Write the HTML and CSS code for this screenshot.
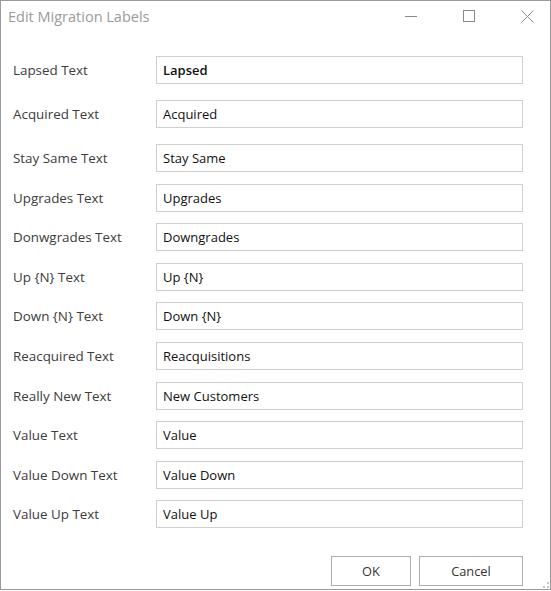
FILE: index.html
```html
<!DOCTYPE html>
<html lang="en">

<head>
    <meta charset="UTF-8">
    <meta name="viewport" content="width=device-width, initial-scale=1.0">
    <title>Edit Migration Labels</title>
    <link rel="stylesheet" href="styles.css">
</head>

<body>
    <div class="window">
        <div class="titlebar">
            <span class="title">Edit Migration Labels</span>
            <div class="controls">
                <svg width="12" height="12" viewBox="0 0 12 12">
                    <line x1="0" y1="6.5" x2="12" y2="6.5" stroke="#8a8a8a" stroke-width="1" />
                </svg>
                <svg width="12" height="12" viewBox="0 0 12 12">
                    <rect x="0.5" y="0.5" width="11" height="11" fill="none" stroke="#8a8a8a" stroke-width="1" />
                </svg>
                <svg width="13" height="13" viewBox="0 0 13 13">
                    <path d="M0.5 0.5 L12.5 12.5 M12.5 0.5 L0.5 12.5" stroke="#8a8a8a" stroke-width="1" />
                </svg>
            </div>
        </div>

        <div class="form">
            <div class="group group-top">
                <div class="row">
                    <label class="label">Lapsed Text</label>
                    <input class="field field-active" type="text" value="Lapsed">
                </div>
                <div class="row">
                    <label class="label">Acquired Text</label>
                    <input class="field" type="text" value="Acquired">
                </div>
            </div>
            <div class="group">
                <div class="row">
                    <label class="label">Stay Same Text</label>
                    <input class="field" type="text" value="Stay Same">
                </div>
                <div class="row">
                    <label class="label">Upgrades Text</label>
                    <input class="field" type="text" value="Upgrades">
                </div>
                <div class="row">
                    <label class="label">Donwgrades Text</label>
                    <input class="field" type="text" value="Downgrades">
                </div>
                <div class="row">
                    <label class="label">Up {N} Text</label>
                    <input class="field" type="text" value="Up {N}">
                </div>
                <div class="row">
                    <label class="label">Down {N} Text</label>
                    <input class="field" type="text" value="Down {N}">
                </div>
                <div class="row">
                    <label class="label">Reacquired Text</label>
                    <input class="field" type="text" value="Reacquisitions">
                </div>
                <div class="row">
                    <label class="label">Really New Text</label>
                    <input class="field" type="text" value="New Customers">
                </div>
                <div class="row">
                    <label class="label">Value Text</label>
                    <input class="field" type="text" value="Value">
                </div>
                <div class="row">
                    <label class="label">Value Down Text</label>
                    <input class="field" type="text" value="Value Down">
                </div>
                <div class="row">
                    <label class="label">Value Up Text</label>
                    <input class="field" type="text" value="Value Up">
                </div>
            </div>
        </div>

        <div class="footer">
            <button class="btn btn-ok">OK</button>
            <button class="btn btn-cancel">Cancel</button>
        </div>

        <div class="grip">
            <span></span><span></span><span></span>
        </div>
    </div>
</body>

</html>
```

FILE: styles.css
```css
* {
    margin: 0;
    padding: 0;
    box-sizing: border-box;
}

body {
    background-color: #ffffff;
    font-family: "Open Sans", "Noto Sans", sans-serif;
}

.window {
    position: relative;
    display: flex;
    flex-direction: column;
    width: 551px;
    height: 590px;
    border: 1px solid #9a9a9a;
    background-color: #ffffff;
}

.titlebar {
    display: flex;
    align-items: center;
    justify-content: space-between;
    height: 30px;
    padding-left: 7px;
}

.title {
    font-size: 14.5px;
    color: #9b9b9b;
}

.controls {
    display: flex;
    align-items: center;
    gap: 46px;
    padding-right: 16px;
}

.form {
    display: flex;
    flex-direction: column;
    gap: 16px;
    padding: 25px 27px 0 12px;
}

.group {
    display: flex;
    flex-direction: column;
    gap: 11.6px;
}

.group-top {
    gap: 16px;
}

.row {
    display: flex;
    align-items: center;
    height: 28px;
}

.label {
    width: 143px;
    font-size: 13.4px;
    color: #3c3c3c;
}

.field {
    width: 367px;
    height: 28px;
    padding: 0 6px;
    border: 1px solid #cfcfcf;
    font-family: inherit;
    font-size: 13px;
    color: #111111;
    outline: none;
}

.field-active {
    font-weight: 600;
}

.footer {
    display: flex;
    justify-content: flex-end;
    gap: 8px;
    margin-top: 28px;
    padding-right: 27px;
}

.btn {
    height: 30px;
    border: 1px solid #adadad;
    background-color: #ffffff;
    font-family: inherit;
    font-size: 12.8px;
    color: #333333;
}

.btn-ok {
    width: 80px;
}

.btn-cancel {
    width: 104px;
}

/* resize grip dots in the corner */
.grip {
    position: absolute;
    right: 1px;
    bottom: 1px;
    width: 6px;
    height: 6px;
}

.grip span {
    position: absolute;
    width: 2px;
    height: 2px;
    background-color: #c4c4c4;
}

.grip span:nth-child(1) {
    right: 0;
    top: 0;
}

.grip span:nth-child(2) {
    right: 0;
    bottom: 0;
}

.grip span:nth-child(3) {
    left: 0;
    bottom: 0;
}
```
